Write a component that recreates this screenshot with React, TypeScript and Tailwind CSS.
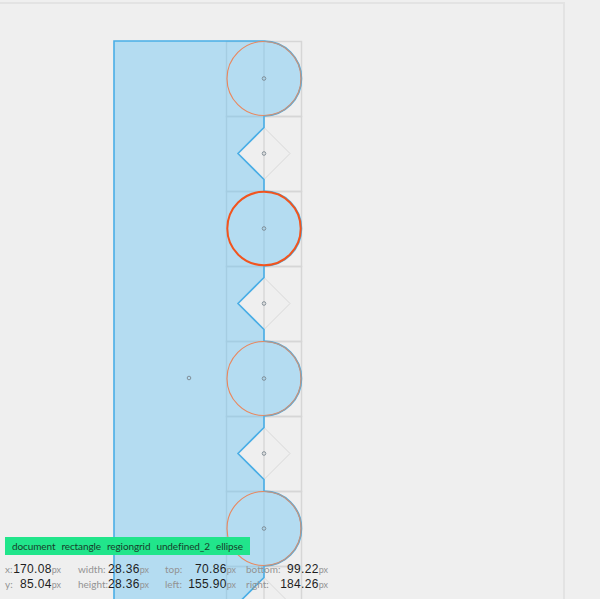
import React from "react"

const ROWS = [0, 1, 2, 3, 4, 5, 6, 7]
const TOP = 41
const CELL = 75
const CX = 264

const buildShape = () => {
  let d = `M114 ${TOP} L${CX} ${TOP}`
  ROWS.forEach((k) => {
    const y0 = TOP + k * CELL
    if (k % 2 === 0) {
      d += ` A37.5 37.5 0 0 1 ${CX} ${y0 + CELL}`
    } else {
      d += ` L${CX} ${y0 + 11.5} L238 ${y0 + 37.5} L${CX} ${y0 + 63.5} L${CX} ${y0 + CELL}`
    }
  })
  d += ` L${CX} 720 L114 720 Z`
  return d
}

const Canvas = () => (
  <svg width="600" height="599" viewBox="0 0 600 599" className="absolute inset-0">
    {/* grid cells */}
    {ROWS.map((k) => (
      <rect
        key={k}
        x="226.5"
        y={TOP + k * CELL + 0.5}
        width="75"
        height="75"
        fill="none"
        stroke="#d6d6d6"
        strokeWidth="1.5"
      />
    ))}
    <line x1={CX} y1={TOP} x2={CX} y2="640" stroke="#cdcdcd" strokeWidth="1" />

    {/* diamonds */}
    {ROWS.filter((k) => k % 2 === 1).map((k) => {
      const y0 = TOP + k * CELL
      return (
        <polygon
          key={k}
          points={`${CX},${y0 + 11.5} 290,${y0 + 37.5} ${CX},${y0 + 63.5} 238,${y0 + 37.5}`}
          fill="none"
          stroke="#d9d9d9"
          strokeWidth="1"
        />
      )
    })}

    {/* region */}
    <path d={buildShape()} fill="#5cc0f5" fillOpacity="0.4" stroke="#4aaee6" strokeWidth="1.6" strokeLinejoin="miter" />

    {/* ellipses */}
    {ROWS.filter((k) => k % 2 === 0).map((k) => {
      const cy = TOP + k * CELL + 37.5
      if (k === 2) {
        return <circle key={k} cx={CX} cy={cy} r="36.7" fill="none" stroke="#f2541e" strokeWidth="2" />
      }
      return (
        <g key={k}>
          <circle cx={CX} cy={cy} r="37" fill="none" stroke="#e9875e" strokeWidth="1.1" />
          <path
            d={`M${CX} ${cy - 37.3} A37.3 37.3 0 0 1 ${CX} ${cy + 37.3}`}
            fill="none"
            stroke="#9aa0a4"
            strokeOpacity="0.75"
            strokeWidth="1.1"
          />
        </g>
      )
    })}

    {/* centre marks */}
    {ROWS.map((k) => (
      <circle key={k} cx={CX} cy={TOP + k * CELL + 37.5} r="1.8" fill="none" stroke="#7a8790" strokeWidth="0.9" />
    ))}
    <circle cx="189" cy="378" r="1.8" fill="none" stroke="#7a8790" strokeWidth="0.9" />
  </svg>
)

const Cell = ({ label, value }: { label: string; value: string }) => (
  <div className="flex items-baseline justify-between">
    <span className="text-[10px] text-[#939393]" style={{ fontFamily: "Lato, sans-serif" }}>
      {label}
    </span>
    <span className="flex items-baseline">
      <span className="text-[12px] tracking-[0.3px] text-[#1e1e1e]">{value}</span>
      <span className="text-[9px] text-[#939393]" style={{ fontFamily: "Lato, sans-serif" }}>
        px
      </span>
    </span>
  </div>
)

export default function App() {
  return (
    <div className="relative w-[600px] h-[599px] overflow-hidden bg-[#efefef]" style={{ fontFamily: "Lato, 'Liberation Sans', sans-serif" }}>
      <div className="mt-[2px] w-[565px] h-[620px] border-t-2 border-r-2 border-[#e3e3e3]" />
      <Canvas />

      <div className="absolute left-[5px] top-[537px] flex flex-col">
        <div className="flex h-[18px] w-[245px] items-center justify-between bg-[#21e58b] px-[7px] text-[10px] tracking-[-0.1px] text-[#173d2a]">
          <span>document</span>
          <span>rectangle</span>
          <span>regiongrid</span>
          <span>undefined_2</span>
          <span>ellipse</span>
        </div>
        <div className="mt-[8px] flex leading-[13px]" style={{ fontFamily: "'Liberation Sans', sans-serif" }}>
          <div className="flex w-[56px] flex-col gap-[2px]">
            <Cell label="x:" value="170.08" />
            <Cell label="y:" value="85.04" />
          </div>
          <div className="ml-[17px] flex w-[71px] flex-col gap-[2px]">
            <Cell label="width:" value="28.36" />
            <Cell label="height:" value="28.36" />
          </div>
          <div className="ml-[16px] flex w-[71px] flex-col gap-[2px]">
            <Cell label="top:" value="70.86" />
            <Cell label="left:" value="155.90" />
          </div>
          <div className="ml-[10px] flex w-[82px] flex-col gap-[2px]">
            <Cell label="bottom:" value="99.22" />
            <Cell label="right:" value="184.26" />
          </div>
        </div>
      </div>
    </div>
  )
}
